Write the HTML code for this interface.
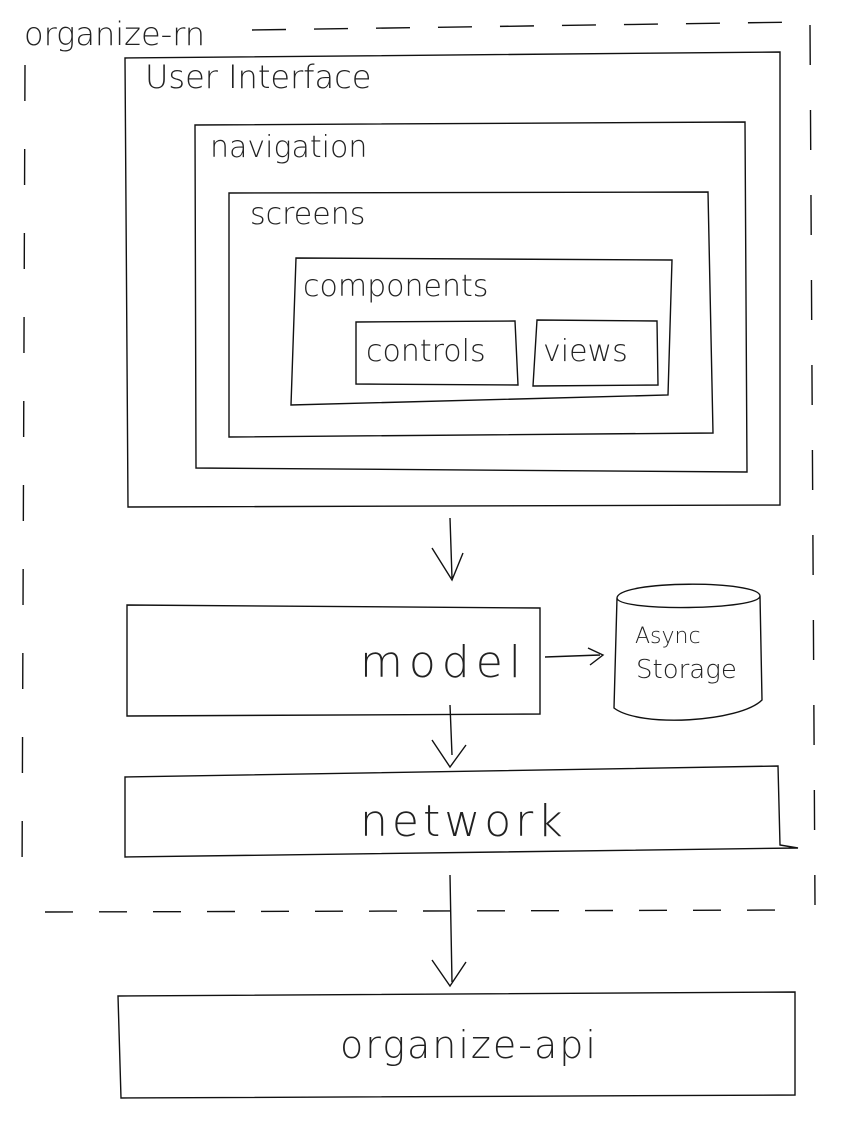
<!DOCTYPE html>
<html><head><meta charset="utf-8"><style>
html,body{margin:0;padding:0;background:#fff;width:850px;height:1128px;overflow:hidden}
svg text{font-family:"DejaVu Sans","Liberation Sans",sans-serif;font-weight:200;fill:#222}
</style></head><body>
<svg width="850" height="1128" viewBox="0 0 850 1128" xmlns="http://www.w3.org/2000/svg">
<g fill="none" stroke="#111" stroke-width="1.4">
<!-- dashed outer -->
<path d="M252 30 L800 22" stroke-dasharray="34 28"/>
<path d="M25 65 L22 885" stroke-dasharray="36 48"/>
<path d="M810 25 L815 905" stroke-dasharray="40 45"/>
<path d="M45 912 L800 910" stroke-dasharray="28 26"/>
<!-- boxes -->
<path d="M125 58 L780 52 L780 505 L128 507 Z"/>
<path d="M195 125 L745 122 L747 472 L196 468 Z"/>
<path d="M229 193 L708 192 L713 433 L229 437 Z"/>
<path d="M296 258 L672 260 L668 395 L291 405 Z"/>
<path d="M356 322 L515 321 L518 385 L356 384 Z"/>
<path d="M537 320 L657 321 L658 385 L533 386 Z"/>
<path d="M450 518 L452 578 M432 548 L452 580 L463 553"/>
<path d="M127 605 L540 608 L540 714 L127 716 Z"/>
<path d="M545 657 L600 655 M588 648 L603 655 L590 665"/>
<path d="M617 598 C618 580 760 580 760 596 C760 610 618 612 617 598 L614 708 C640 728 740 722 762 700 L760 596"/>
<path d="M450 705 L452 755 M432 740 L450 767 L466 745"/>
<path d="M125 777 L778 766 L780 845 L798 848 L125 857 Z"/>
<path d="M450 875 L452 982 M432 960 L450 986 L466 962"/>
<path d="M118 996 L795 992 L795 1095 L121 1098 Z"/>
</g>
<text x="24" y="45" font-size="32">organize-rn</text>
<text x="145" y="88" font-size="32">User Interface</text>
<text x="210" y="157" font-size="30">navigation</text>
<text x="250" y="224" font-size="30">screens</text>
<text x="303" y="296" font-size="30">components</text>
<text x="366" y="361" font-size="30">controls</text>
<text x="543" y="361" font-size="30">views</text>
<text x="360" y="677" font-size="44" letter-spacing="6">model</text>
<text x="635" y="643" font-size="22">Async</text>
<text x="636" y="678" font-size="26">Storage</text>
<text x="360" y="836" font-size="44" letter-spacing="4">network</text>
<text x="340" y="1058" font-size="38" letter-spacing="2">organize-api</text>
</svg>
</body></html>
